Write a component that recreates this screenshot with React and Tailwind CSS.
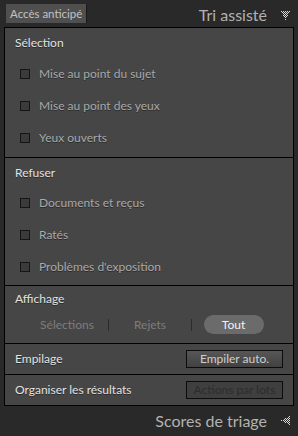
const FONT = "font-['Lato','Open_Sans','Liberation_Sans',sans-serif]";

function DotTriangle({ dir }) {
  const dots = [];
  for (let y = 0; y < 9; y++) {
    for (let x = 0; x < 9; x++) {
      if ((x + y) % 2 !== 0) continue;
      const ok = dir === 'down' ? Math.abs(x - 4) <= 4 - y / 2 : Math.abs(y - 4) <= 4 - (8 - x) / 2;
      if (ok) dots.push(<rect key={`${x}-${y}`} x={x} y={y} width="1" height="1" />);
    }
  }
  return (
    <svg width="9" height="9" viewBox="0 0 9 9" fill="#d8d8d8" className="shrink-0">
      {dots}
    </svg>
  );
}

function CheckRow({ label }) {
  return (
    <div className="flex h-[32px] items-center pl-[15px]">
      <span className="h-[10px] w-[10px] shrink-0 border border-[#151515] bg-[#3b3b3b]" />
      <span className="ml-[9px] text-[12px] text-[#a9a9a9] [text-shadow:0_1px_0_#2c2c2c]">{label}</span>
    </div>
  );
}

function Heading({ children, className = '' }) {
  return (
    <div className={`flex items-center pl-[10px] text-[12px] text-[#e2e2e2] [text-shadow:0_1px_0_#2a2a2a] ${className}`}>
      {children}
    </div>
  );
}

function ActionRow({ label, button, disabled }) {
  return (
    <div className="flex h-[30px] items-center justify-between pl-[10px] pr-[10px]">
      <span className="text-[12px] text-[#e2e2e2] [text-shadow:0_1px_0_#2a2a2a]">{label}</span>
      <button
        className={`flex h-[18px] w-[97px] items-center justify-center border border-[#0c0c0c] text-[12px] ${
          disabled ? 'bg-[#3f3f3f] text-[#2c2c2c]' : 'bg-gradient-to-b from-[#575757] to-[#414141] text-[#cfcfcf]'
        }`}
      >
        {button}
      </button>
    </div>
  );
}

export default function App() {
  return (
    <div className={`flex h-[436px] w-[298px] flex-col bg-[#292929] ${FONT}`}>
      <div className="flex h-[27px] items-start justify-between pr-[8px] pl-[6px] pt-[4px]">
        <span className="flex h-[19px] items-center bg-[#4f4f4f] px-[4px] text-[11.5px] text-[#c2c2c2] shadow-[1px_0_0_#1a1a1a]">
          Accès anticipé
        </span>
        <div className="flex items-center gap-[14px] pt-[1px]">
          <span className="text-[16px] leading-[20px] text-[#b2b2b2]">Tri assisté</span>
          <DotTriangle dir="down" />
        </div>
      </div>

      <div className="mx-[4px] border border-black bg-[#464646]">
        <div className="pb-[3px]">
          <Heading className="h-[30px]">Sélection</Heading>
          <CheckRow label="Mise au point du sujet" />
          <CheckRow label="Mise au point des yeux" />
          <CheckRow label="Yeux ouverts" />
        </div>
        <div className="border-t border-black pb-[2px]">
          <Heading className="h-[29px]">Refuser</Heading>
          <CheckRow label="Documents et reçus" />
          <CheckRow label="Ratés" />
          <CheckRow label="Problèmes d'exposition" />
        </div>
        <div className="border-t border-black pb-[6px]">
          <Heading className="h-[26px]">Affichage</Heading>
          <div className="ml-[21px] flex h-[25px] w-[249px] items-center text-[12px]">
            <span className="flex w-[82px] justify-center text-[#7d7d7d]">Sélections</span>
            <span className="h-[12px] w-px bg-[#2b2b2b]" />
            <span className="flex w-[82px] justify-center text-[#7d7d7d]">Rejets</span>
            <span className="h-[12px] w-px bg-[#2b2b2b]" />
            <span className="flex w-[83px] justify-center">
              <span className="flex h-[19px] w-[60px] items-center justify-center rounded-full bg-[#6b6b6b] text-[#f2f2f2]">
                Tout
              </span>
            </span>
          </div>
        </div>
        <div className="border-t border-black">
          <ActionRow label="Empilage" button="Empiler auto." />
        </div>
        <div className="border-t border-black">
          <ActionRow label="Organiser les résultats" button="Actions par lots" disabled />
        </div>
      </div>

      <div className="flex flex-1 items-center justify-end gap-[14px] pr-[8px] pb-[1px]">
        <span className="text-[16px] leading-[20px] text-[#b2b2b2]">Scores de triage</span>
        <DotTriangle dir="left" />
      </div>
    </div>
  );
}
